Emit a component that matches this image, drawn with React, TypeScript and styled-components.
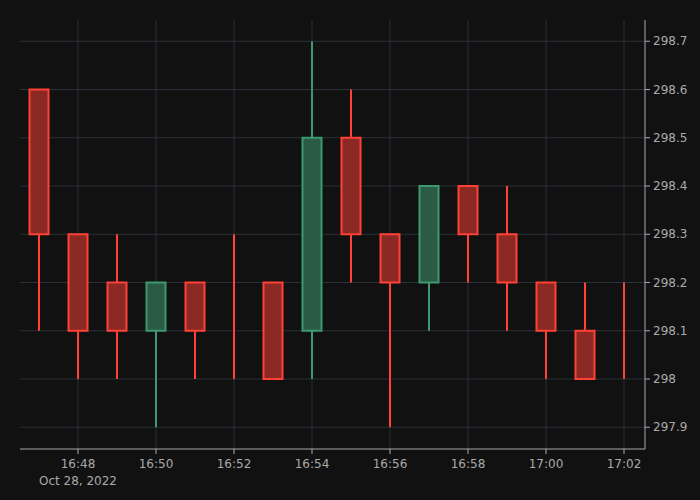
import styled, { createGlobalStyle } from 'styled-components'

const Global = createGlobalStyle`
  html, body { margin: 0; background: #111111; }
`

const Frame = styled.div`
  width: 700px;
  height: 500px;
  background: #111111;
  font-family: "DejaVu Sans", sans-serif;
`

type Candle = { t: number; o: number; h: number; l: number; c: number }

// t = minutes after 16:47
const candles: Candle[] = [
  { t: 0, o: 298.6, h: 298.6, l: 298.1, c: 298.3 },
  { t: 1, o: 298.3, h: 298.3, l: 298.0, c: 298.1 },
  { t: 2, o: 298.2, h: 298.3, l: 298.0, c: 298.1 },
  { t: 3, o: 298.1, h: 298.2, l: 297.9, c: 298.2 },
  { t: 4, o: 298.2, h: 298.2, l: 298.0, c: 298.1 },
  { t: 5, o: 298.1, h: 298.3, l: 298.0, c: 298.1 },
  { t: 6, o: 298.2, h: 298.2, l: 298.0, c: 298.0 },
  { t: 7, o: 298.1, h: 298.7, l: 298.0, c: 298.5 },
  { t: 8, o: 298.5, h: 298.6, l: 298.2, c: 298.3 },
  { t: 9, o: 298.3, h: 298.3, l: 297.9, c: 298.2 },
  { t: 10, o: 298.2, h: 298.4, l: 298.1, c: 298.4 },
  { t: 11, o: 298.4, h: 298.4, l: 298.2, c: 298.3 },
  { t: 12, o: 298.3, h: 298.4, l: 298.1, c: 298.2 },
  { t: 13, o: 298.2, h: 298.2, l: 298.0, c: 298.1 },
  { t: 14, o: 298.1, h: 298.2, l: 298.0, c: 298.0 },
  { t: 15, o: 298.0, h: 298.2, l: 298.0, c: 298.0 },
]

const left = 20
const right = 645
const top = 20
const bottom = 449
const x = (t: number) => 39 + t * 39
const y = (p: number) => 379 - (p - 298.0) * 482.5

const yTicks = [297.9, 298.0, 298.1, 298.2, 298.3, 298.4, 298.5, 298.6, 298.7]
const xTicks = ['16:48', '16:50', '16:52', '16:54', '16:56', '16:58', '17:00', '17:02']

export default function App() {
  return (
    <Frame>
      <Global />
      <svg width={700} height={500} fontFamily='"DejaVu Sans", sans-serif' fontSize={12}>
        {yTicks.map((p) => (
          <g key={p}>
            <line x1={left} x2={right} y1={y(p)} y2={y(p)} stroke="#283039" />
            <line x1={right} x2={right + 5} y1={y(p)} y2={y(p)} stroke="#aaa" />
            <text x={653} y={y(p) + 4} fill="#aaa">{p === 298 ? '298' : p.toFixed(1)}</text>
          </g>
        ))}
        {xTicks.map((label, i) => {
          const xx = 78 + i * 78
          return (
            <g key={label}>
              <line x1={xx} x2={xx} y1={top} y2={bottom} stroke="#283039" />
              <line x1={xx} x2={xx} y1={bottom} y2={bottom + 5} stroke="#aaa" />
              <text x={xx} y={468} fill="#aaa" textAnchor="middle">{label}</text>
            </g>
          )
        })}
        <text x={78} y={485} fill="#aaa" textAnchor="middle">Oct 28, 2022</text>
        <line x1={left} x2={right} y1={bottom} y2={bottom} stroke="#aaa" />
        <line x1={right} x2={right} y1={top} y2={bottom} stroke="#aaa" />
        {candles.map((k) => {
          const up = k.c > k.o
          const stroke = up ? '#3d9970' : '#ff4136'
          const fill = up ? '#2b5a45' : '#8b2a24'
          const bt = y(Math.max(k.o, k.c))
          const bb = y(Math.min(k.o, k.c))
          const cx = x(k.t)
          return (
            <g key={k.t}>
              <line x1={cx} x2={cx} y1={y(k.h)} y2={y(k.l)} stroke={stroke} strokeWidth={2} />
              <rect x={cx - 9.5} y={bt} width={19} height={Math.max(bb - bt, 0)} fill={fill} stroke={stroke} strokeWidth={2} />
            </g>
          )
        })}
      </svg>
    </Frame>
  )
}
